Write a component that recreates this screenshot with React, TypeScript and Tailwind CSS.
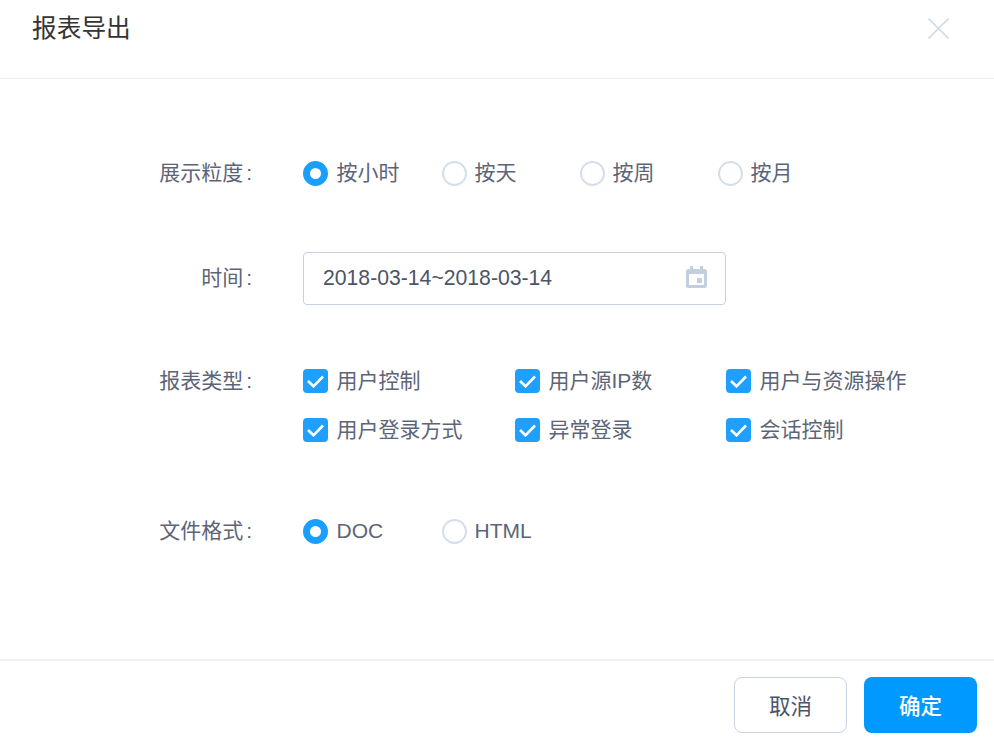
const font = '[font-family:"Liberation_Sans","Noto_Sans_CJK_SC",sans-serif]';

function Radio({ label, checked, className }: { label: string; checked?: boolean; className?: string }) {
  return (
    <label className={`flex items-center ${checked ? 'gap-[8.5px]' : 'gap-[7.5px]'} ${className ?? 'w-[138px]'}`}>
      {checked ? (
        <span className="h-[25px] w-[25px] shrink-0 rounded-full border-[7px] border-[#1a9fff] bg-white" />
      ) : (
        <span className="h-[25px] w-[25px] shrink-0 rounded-full border-2 border-[#d5deea] bg-white" />
      )}
      <span>{label}</span>
    </label>
  );
}

function Check({ label }: { label: string }) {
  return (
    <label className="flex h-10 items-center gap-[8.5px]">
      <span className="flex h-6 w-[25px] shrink-0 items-center justify-center rounded-[4px] bg-[#1f9fff]">
        <svg width="17" height="13" viewBox="0 0 17 13" fill="none">
          <path d="M1 6l5.500 5.300L16 1.500" stroke="#fff" strokeWidth="2.600" />
        </svg>
      </span>
      <span>{label}</span>
    </label>
  );
}

function Row({ label, tall, className, children }: { label: string; tall?: boolean; className?: string; children: React.ReactNode }) {
  return (
    <div className={`flex ${className ?? ''}`}>
      <div className={`flex w-[253px] shrink-0 items-center justify-end pr-px ${tall ? 'h-[53px] pb-[2px]' : 'h-10'}`}>
        {label}
        <span className="ml-[3px]">:</span>
      </div>
      <div className="ml-[50px]">{children}</div>
    </div>
  );
}

export default function App() {
  return (
    <div className={`flex h-[754px] w-[994px] flex-col overflow-hidden bg-white text-[21px] text-[#5c6577] ${font}`}>
      <header className="flex h-[79px] shrink-0 items-start justify-between border-b border-[#eaeff6] pl-8 pr-[45px]">
        <h1 className="mt-[11px] text-[24.7px] leading-9 text-[#333]">报表导出</h1>
        <svg className="mt-[18px]" width="21" height="21" viewBox="0 0 21 21" fill="none">
          <path d="M0.5 0.5l20 20M20.5 0.5l-20 20" stroke="#d3dbe7" strokeWidth="1.6" />
        </svg>
      </header>

      <main className="h-[580px] shrink-0 pt-[74px]">
        <Row label="展示粒度">
          <div className="flex h-10 items-center">
            <Radio label="按小时" checked className="w-[139px]" />
            <Radio label="按天" />
            <Radio label="按周" />
            <Radio label="按月" />
          </div>
        </Row>

        <Row label="时间" tall className="mt-[59px]">
          <div className="flex h-[53px] w-[423px] items-center justify-between rounded-[4px] border-[1.5px] border-[#c5d0e0] pb-[2px] pl-[19px] pr-[18px] text-[21.2px] text-[#4b5567]">
            <span>2018-03-14~2018-03-14</span>
            <svg className="-mt-px" width="21" height="22" viewBox="0 0 21 22" fill="none">
              <path d="M4 0h3v3h7V0h3v3h1.500A2.500 2.500 0 0 1 21 5.500V19.500A2.500 2.500 0 0 1 18.500 22h-16A2.500 2.500 0 0 1 0 19.500V5.500A2.500 2.500 0 0 1 2.500 3H4z" fill="#c3cede" />
              <rect x="3" y="8" width="15" height="11" fill="#fff" />
              <rect x="11" y="12" width="5" height="5" fill="#c3cede" />
            </svg>
          </div>
        </Row>

        <Row label="报表类型" className="mt-[56px]">
          <div className="grid w-[634px] grid-cols-[212px_211px_211px] gap-y-[9px]">
            <Check label="用户控制" />
            <Check label="用户源IP数" />
            <Check label="用户与资源操作" />
            <Check label="用户登录方式" />
            <Check label="异常登录" />
            <Check label="会话控制" />
          </div>
        </Row>

        <Row label="文件格式" className="mt-[61px]">
          <div className="flex h-10 items-center">
            <Radio label="DOC" checked className="w-[139px]" />
            <Radio label="HTML" />
          </div>
        </Row>
      </main>

      <footer className="flex flex-1 justify-end gap-[17px] border-t-2 border-[#eff2f7] pr-[17px] pt-4 text-[21.500px]">
        <button className="h-14 w-[113px] rounded-lg border-[1.5px] border-[#c9d4e2] bg-white pt-1 text-[#4b5567]">取消</button>
        <button className="h-14 w-[113px] rounded-lg bg-[#0099ff] pt-1 font-medium text-white">确定</button>
      </footer>
    </div>
  );
}
